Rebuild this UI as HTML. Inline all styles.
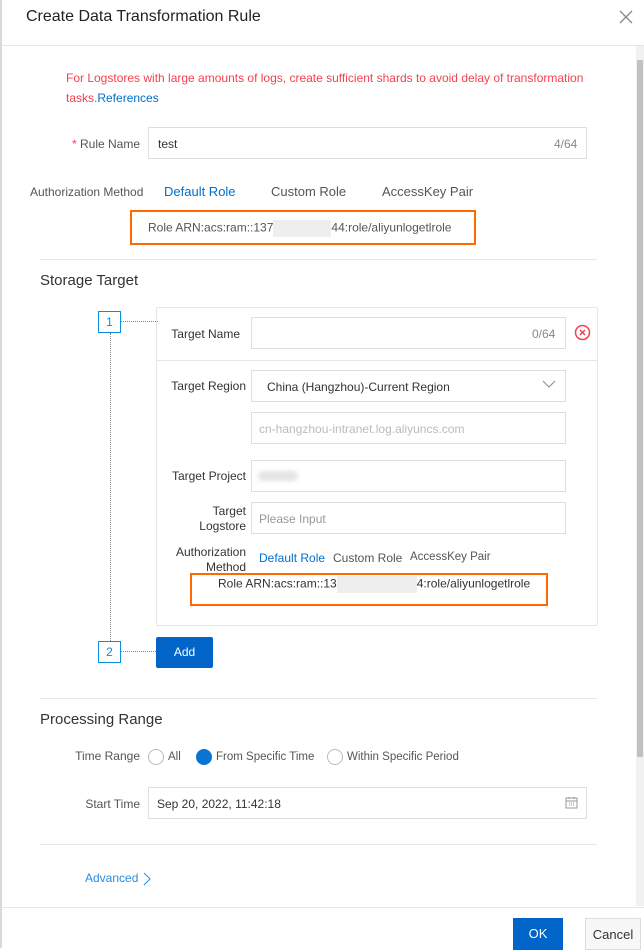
<!DOCTYPE html>
<html><head><meta charset="utf-8"><style>
*{box-sizing:border-box;margin:0;padding:0}
body{width:644px;height:948px;overflow:hidden;background:#fff;font-family:"Liberation Sans",sans-serif;color:#333;position:relative}
.a{position:absolute;white-space:nowrap}
.inp{position:absolute;border:1px solid #dedede;background:#fff}
.lbl{position:absolute;font-size:12px;color:#555;text-align:right}
.sep{position:absolute;height:1px;background:#e6e6e6}
.blue{color:#0070cc}
.orange{position:absolute;border:2px solid #ff6a00}
.step{position:absolute;width:23px;height:22px;border:1px solid #0a8ee0;color:#0a8ee0;font-size:12px;text-align:center;line-height:20px;background:#fff}
.radio{position:absolute;width:16px;height:16px;border:1px solid #bbb;border-radius:50%;background:#fff}
</style></head><body>
<div class="a" style="left:0;top:0;width:2px;height:948px;background:#d9d9d9"></div>
<div class="a" style="left:26px;top:8px;font-size:16px;color:#222">Create Data Transformation Rule</div>
<svg class="a" style="left:619px;top:10px" width="14" height="14"><path d="M1 1L13 13M13 1L1 13" stroke="#888" stroke-width="1.3"/></svg>
<div class="sep" style="left:2px;top:45px;width:642px"></div>
<div class="a" style="left:636px;top:46px;width:8px;height:860px;background:#f1f1f1"></div>
<div class="a" style="left:637px;top:60px;width:6px;height:697px;background:#c1c1c1"></div>

<div class="a" style="left:66px;top:68px;font-size:12px;color:#f5414f;line-height:20px">For Logstores with large amounts of logs, create sufficient shards to avoid delay of transformation<br>tasks.<span class="blue">References</span></div>

<div class="lbl" style="left:40px;top:137px;width:100px"><span style="color:#f5414f">*</span> Rule Name</div>
<div class="inp" style="left:148px;top:127px;width:439px;height:32px"></div>
<div class="a" style="left:158px;top:137px;font-size:12px">test</div>
<div class="a" style="left:554px;top:137px;font-size:12px;color:#888">4/64</div>

<div class="a" style="left:30px;top:185px;font-size:12px;color:#555">Authorization Method</div>
<div class="a blue" style="left:164px;top:184px;font-size:13px">Default Role</div>
<div class="a" style="left:271px;top:184px;font-size:13px;color:#555">Custom Role</div>
<div class="a" style="left:382px;top:184px;font-size:13px;color:#555">AccessKey Pair</div>
<div class="orange" style="left:130px;top:210px;width:346px;height:35px"></div>
<div class="a" style="left:148px;top:220px;font-size:12px;color:#555">Role ARN:acs:ram::137<span style="display:inline-block;width:58px;height:17px;background:#eee;vertical-align:middle"></span>44:role/aliyunlogetlrole</div>

<div class="sep" style="left:40px;top:259px;width:557px"></div>
<div class="a" style="left:40px;top:272px;font-size:15px;color:#333">Storage Target</div>

<div class="a" style="left:110px;top:333px;height:308px;border-left:1px dotted #888"></div>
<div class="a" style="left:121px;top:321px;width:37px;border-top:1px dotted #888"></div>
<div class="a" style="left:121px;top:651px;width:37px;border-top:1px dotted #888"></div>
<div class="step" style="left:98px;top:311px">1</div>
<div class="step" style="left:98px;top:641px">2</div>

<div class="a" style="left:156px;top:307px;width:442px;height:319px;border:1px solid #e6e6e6;border-radius:2px"></div>
<div class="sep" style="left:157px;top:360px;width:440px"></div>
<div class="lbl" style="left:150px;top:327px;width:90px;color:#333">Target Name</div>
<div class="inp" style="left:251px;top:317px;width:315px;height:32px"></div>
<div class="a" style="left:532px;top:327px;font-size:12px;color:#888">0/64</div>
<svg class="a" style="left:574px;top:324px" width="17" height="17"><circle cx="8.5" cy="8.5" r="7" fill="none" stroke="#f5414f" stroke-width="1.5"/><path d="M6 6L11 11M11 6L6 11" stroke="#f5414f" stroke-width="1.5"/></svg>

<div class="lbl" style="left:150px;top:379px;width:96px;color:#333">Target Region</div>
<div class="inp" style="left:251px;top:370px;width:315px;height:32px"></div>
<div class="a" style="left:267px;top:380px;font-size:12px;color:#333">China (Hangzhou)-Current Region</div>
<svg class="a" style="left:542px;top:380px" width="14" height="9"><path d="M1 1L7 7L13 1" stroke="#888" fill="none"/></svg>
<div class="inp" style="left:251px;top:412px;width:315px;height:32px"></div>
<div class="a" style="left:259px;top:422px;font-size:12px;color:#bbb">cn-hangzhou-intranet.log.aliyuncs.com</div>

<div class="lbl" style="left:150px;top:469px;width:96px;color:#333">Target Project</div>
<div class="inp" style="left:251px;top:460px;width:315px;height:32px"></div>
<div class="a" style="left:258px;top:471px;width:40px;height:10px;background:#e4e4e4;border-radius:5px;filter:blur(2px)"></div>
<div class="lbl" style="left:150px;top:504px;width:96px;color:#333;line-height:15px">Target<br>Logstore</div>
<div class="inp" style="left:251px;top:502px;width:315px;height:32px"></div>
<div class="a" style="left:259px;top:512px;font-size:12px;color:#999">Please Input</div>

<div class="lbl" style="left:150px;top:545px;width:96px;color:#333;line-height:15px">Authorization<br>Method</div>
<div class="a blue" style="left:259px;top:551px;font-size:12px">Default Role</div>
<div class="a" style="left:333px;top:551px;font-size:12px;color:#555">Custom Role</div>
<div class="a" style="left:410px;top:551px;font-size:11.5px;color:#555">AccessKey Pair</div>
<div class="orange" style="left:190px;top:573px;width:358px;height:33px"></div>
<div class="a" style="left:218px;top:576px;font-size:12px;color:#333">Role ARN:acs:ram::13<span style="display:inline-block;width:80px;height:17px;background:#eee;vertical-align:middle"></span>4:role/aliyunlogetlrole</div>

<div class="a" style="left:156px;top:637px;width:57px;height:31px;background:#0064c8;border-radius:2px;color:#fff;font-size:12px;text-align:center;line-height:31px">Add</div>

<div class="sep" style="left:40px;top:698px;width:557px"></div>
<div class="a" style="left:40px;top:711px;font-size:15px;color:#333">Processing Range</div>
<div class="lbl" style="left:40px;top:749px;width:100px">Time Range</div>
<div class="radio" style="left:148px;top:749px"></div>
<div class="a" style="left:168px;top:751px;font-size:11.5px;color:#555">All</div>
<div class="radio" style="left:196px;top:749px;border:5px solid #0a74d4;background:#0a74d4"></div>
<div class="a" style="left:216px;top:751px;font-size:11.5px;color:#555">From Specific Time</div>
<div class="radio" style="left:327px;top:749px"></div>
<div class="a" style="left:347px;top:751px;font-size:11.5px;color:#555">Within Specific Period</div>

<div class="lbl" style="left:40px;top:797px;width:100px">Start Time</div>
<div class="inp" style="left:148px;top:787px;width:439px;height:32px"></div>
<div class="a" style="left:157px;top:797px;font-size:12px;color:#333">Sep 20, 2022, 11:42:18</div>
<svg class="a" style="left:565px;top:796px" width="13" height="13"><rect x="1" y="2" width="11" height="10" fill="none" stroke="#999"/><path d="M1 5H12M4 7h1M6 7h1M8 7h1M4 9h1M6 9h1M8 9h1M4 1v2M9 1v2" stroke="#999"/></svg>

<div class="sep" style="left:40px;top:844px;width:557px"></div>
<div class="a blue" style="left:85px;top:871px;font-size:12px;color:#2a8de0">Advanced</div>
<svg class="a" style="left:142px;top:872px" width="10" height="14"><path d="M2 1L8 7L2 13" stroke="#2a8de0" fill="none"/></svg>

<div class="sep" style="left:2px;top:907px;width:642px"></div>
<div class="a" style="left:513px;top:918px;width:50px;height:32px;background:#0064c8;color:#fff;font-size:13px;text-align:center;line-height:32px">OK</div>
<div class="a" style="left:585px;top:918px;width:56px;height:32px;border:1px solid #ddd;background:#f7f7f7;color:#333;font-size:13px;text-align:center;line-height:32px">Cancel</div>
</body></html>
